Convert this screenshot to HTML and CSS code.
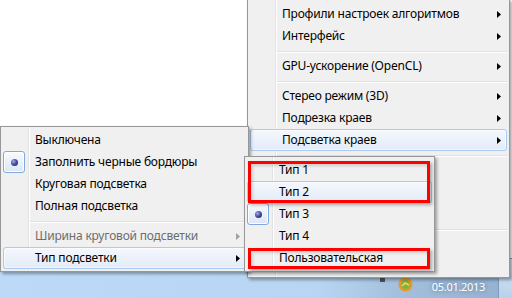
FILE: index.html
```html
<!DOCTYPE html>
<html lang="ru">
<head>
    <meta charset="UTF-8">
    <title>Подсветка краев</title>
    <link rel="stylesheet" href="styles.css">
</head>
<body>
    <div class="screen">
        <div class="window"></div>
        <div class="taskbar">
            <span class="tray-dot"></span>
            <svg class="tray-icon" width="15" height="15" viewBox="0 0 15 15">
                <circle cx="7.5" cy="7.5" r="7" fill="#e39a2c"/>
                <circle cx="7.5" cy="7.5" r="4.5" fill="#7bb53a"/>
                <path d="M4 9 L7 6 L11 8" stroke="#f6d36a" stroke-width="1.5" fill="none"/>
            </svg>
            <span class="clock">05.01.2013</span>
            <span class="show-desktop"></span>
        </div>

        <!-- главное меню -->
        <ul class="menu menu-main">
            <li class="item"><span class="label">Профили настроек алгоритмов</span><svg class="arrow" viewBox="0 0 4 7"><path d="M0 0L4 3.5L0 7z"/></svg></li>
            <li class="item"><span class="label">Интерфейс</span><svg class="arrow" viewBox="0 0 4 7"><path d="M0 0L4 3.5L0 7z"/></svg></li>
            <li class="sep"></li>
            <li class="item"><span class="label">GPU-ускорение (OpenCL)</span><svg class="arrow" viewBox="0 0 4 7"><path d="M0 0L4 3.5L0 7z"/></svg></li>
            <li class="sep"></li>
            <li class="item"><span class="label">Стерео режим (3D)</span><svg class="arrow" viewBox="0 0 4 7"><path d="M0 0L4 3.5L0 7z"/></svg></li>
            <li class="item"><span class="label">Подрезка краев</span><svg class="arrow" viewBox="0 0 4 7"><path d="M0 0L4 3.5L0 7z"/></svg></li>
            <li class="item hover"><span class="label">Подсветка краев</span><svg class="arrow" viewBox="0 0 4 7"><path d="M0 0L4 3.5L0 7z"/></svg></li>
            <li class="sep"></li>
            <li class="item"><svg class="arrow" viewBox="0 0 4 7"><path d="M0 0L4 3.5L0 7z"/></svg></li>
            <li class="item"><svg class="arrow" viewBox="0 0 4 7"><path d="M0 0L4 3.5L0 7z"/></svg></li>
            <li class="item"><svg class="arrow" viewBox="0 0 4 7"><path d="M0 0L4 3.5L0 7z"/></svg></li>
            <li class="sep"></li>
            <li class="item"><svg class="arrow" viewBox="0 0 4 7"><path d="M0 0L4 3.5L0 7z"/></svg></li>
            <li class="item"></li>
        </ul>

        <!-- подменю "Подсветка краев" -->
        <ul class="menu menu-edges">
            <li class="item"><span class="label">Выключена</span></li>
            <li class="item checked"><span class="radio"><span class="bullet"></span></span><span class="label">Заполнить черные бордюры</span></li>
            <li class="item"><span class="label">Круговая подсветка</span></li>
            <li class="item"><span class="label">Полная подсветка</span></li>
            <li class="sep"></li>
            <li class="item disabled"><span class="label">Ширина круговой подсветки</span><svg class="arrow" viewBox="0 0 4 7"><path d="M0 0L4 3.5L0 7z"/></svg></li>
            <li class="item hover"><span class="label">Тип подсветки</span><svg class="arrow" viewBox="0 0 4 7"><path d="M0 0L4 3.5L0 7z"/></svg></li>
        </ul>

        <!-- подменю "Тип подсветки" -->
        <ul class="menu menu-type">
            <li class="item"><span class="label">Тип 1</span></li>
            <li class="item hover"><span class="label">Тип 2</span></li>
            <li class="item checked"><span class="radio"><span class="bullet"></span></span><span class="label">Тип 3</span></li>
            <li class="item"><span class="label">Тип 4</span></li>
            <li class="item"><span class="label">Пользовательская</span></li>
        </ul>

        <div class="mark mark-top"></div>
        <div class="mark mark-bottom"></div>
    </div>
</body>
</html>
```

FILE: styles.css
```css
*{
    margin: 0;
    padding: 0;
    box-sizing: border-box;
}
body{
    width: 512px;
    height: 298px;
    overflow: hidden;
    background-color: #fff;
    font-family: "Noto Sans", "Open Sans", sans-serif;
    font-size: 12px;
}
.screen{
    position: relative;
    height: 298px;
    display: flex;
    flex-direction: column;
}
.window{
    flex: 1;
    background-color: #fff;
}
.taskbar{
    height: 40px;
    display: flex;
    justify-content: flex-end;
    align-items: flex-end;
    background: linear-gradient(to right, #bcdaf7 0%, #b8d6f3 62%, #a3bfdc 78%, #93b1cf 100%);
}
.tray-dot{
    width: 5px;
    height: 4px;
    margin: 0 13px 16px 0;
    background-color: #4a5560;
}
.tray-icon{
    margin: 0 19px 6px 0;
}
.clock{
    margin: 0 13px 3px 0;
    font-size: 11px;
    letter-spacing: -0.3px;
    line-height: 16px;
    color: #fff;
    text-shadow: 0 0 4px rgba(40, 70, 110, 0.6);
}
.show-desktop{
    align-self: stretch;
    width: 14px;
    background: linear-gradient(#d3e5f7, #b9d2ea);
    border-left: 1px solid #7d9cbc;
    border-top: 1px solid #7d9cbc;
}

/* меню в стиле Windows 7 */
.menu{
    position: absolute;
    list-style: none;
    padding: 2px;
    border: 1px solid #979797;
    background: linear-gradient(to right, transparent 27px, #e2e3e3 27px, #e2e3e3 28px, #fff 28px, #fff 29px, transparent 29px), #f0f0f0;
    box-shadow: 2px 2px 3px rgba(0, 0, 0, 0.35);
    letter-spacing: -0.2px;
}
.menu-main{
    left: 247px;
    top: -1px;
    width: 263px;
    padding-top: 3px;
    padding-bottom: 0;
}
.menu-edges{
    left: 0;
    top: 126px;
    width: 249px;
}
.menu-type{
    left: 244px;
    top: 156px;
    width: 191px;
}
.item{
    display: flex;
    align-items: center;
    height: 22px;
    padding: 0 6px 0 32px;
    border-radius: 3px;
    color: #000;
    white-space: nowrap;
}
.item.checked{
    padding-left: 0;
}
.item .label{
    flex: 1;
    line-height: 16px;
}
.item .arrow{
    width: 4px;
    height: 7px;
    fill: #000;
}
.item.disabled{
    color: #6d6d6d;
}
.item.disabled .arrow{
    fill: #a0a0a0;
}
.item.hover{
    background: linear-gradient(#f5f8fd, #e3ebf7);
    box-shadow: inset 0 0 0 1px #aacbf0, inset 0 0 0 2px rgba(255, 255, 255, 0.55);
}
.sep{
    height: 8px;
    margin-left: 27px;
    background: linear-gradient(transparent 4px, #e0e0e0 4px, #e0e0e0 5px, #fff 5px, #fff 6px, transparent 6px);
}
.radio{
    flex: none;
    width: 22px;
    height: 22px;
    margin-right: 10px;
    display: flex;
    align-items: center;
    justify-content: center;
    border: 1px solid #7eaae0;
    border-radius: 3px;
    background: linear-gradient(#f8fbfe, #dbe6f6);
    box-shadow: inset 0 0 0 1px #fff;
}
.bullet{
    width: 7px;
    height: 7px;
    border-radius: 50%;
    background: radial-gradient(circle at 35% 35%, #a4a9e4, #3d4290 55%, #22265c);
}

/* красные рамки-пометки */
.mark{
    position: absolute;
    left: 248px;
    width: 182px;
    border: 3px solid #f00;
    box-shadow: 2px 2px 3px rgba(0, 0, 0, 0.3), inset 2px 2px 3px rgba(0, 0, 0, 0.15);
}
.mark-top{
    top: 161px;
    height: 42px;
}
.mark-bottom{
    top: 248px;
    height: 21px;
}
```
